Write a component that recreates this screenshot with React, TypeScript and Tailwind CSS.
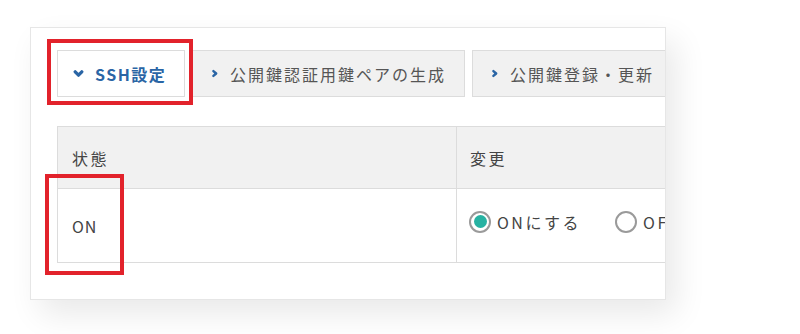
import React from "react";

const tabs = [
    { label: "公開鍵認証用鍵ペアの生成", width: "w-[273px]" },
    { label: "公開鍵登録・更新", width: "w-[260px]" },
];

const Chevron = ({ down }: { down?: boolean }) => (
    <svg
        viewBox="0 0 10 10"
        className={down ? "w-[11px] h-[11px]" : "w-[8px] h-[11px]"}
        fill="none"
        stroke="#2a65a5"
        strokeWidth={3}
        strokeLinecap="round"
        strokeLinejoin="round"
    >
        {down ? (
            <path d="M2 3.5 L5 6.5 L8 3.5" />
        ) : (
            <path d="M3 2 L6.5 5 L3 8" />
        )}
    </svg>
);

const Radio = ({ checked }: { checked?: boolean }) => (
    <span className="w-[22px] h-[22px] rounded-full border-2 border-[#9a9a9a] bg-white flex items-center justify-center shrink-0">
        {checked && <span className="w-[13px] h-[13px] rounded-full bg-[#27b2a2]" />}
    </span>
);

export default function App() {
    return (
        <div
            className="w-[800px] h-[334px] bg-white relative overflow-hidden pt-[27px] pl-[30px]"
            style={{ fontFamily: '"Noto Sans CJK JP", "Noto Sans", sans-serif' }}
        >
            <div className="w-[636px] h-[273px] bg-white border border-[#e6e6e6] shadow-[10px_14px_30px_rgba(0,0,0,0.09)] overflow-hidden pt-[22px] pl-[26px]">
                {/* tabs */}
                <div className="flex gap-[7px] w-[900px]">
                    <div className="w-[128px] h-[47px] shrink-0 bg-white border border-[#dcdcdc] flex items-center pl-[15px] gap-[11px] text-[16px] font-bold text-[#2a65a5] tracking-[1.5px]">
                        <Chevron down />
                        <span>SSH設定</span>
                    </div>
                    {tabs.map((t) => (
                        <div
                            key={t.label}
                            className={`${t.width} h-[47px] shrink-0 bg-[#f1f1f1] border border-[#dcdcdc] flex items-center pl-[18px] gap-[11px] text-[16px] text-[#555] tracking-[2px]`}
                        >
                            <Chevron />
                            <span>{t.label}</span>
                        </div>
                    ))}
                </div>

                {/* table */}
                <div className="mt-[29px] w-[900px] grid grid-cols-[399px_1fr] border-t border-l border-[#dcdcdc] text-[16px] text-[#444] tracking-[2.5px]">
                    <div className="h-[62px] bg-[#f1f1f1] border-r border-b border-[#dcdcdc] flex items-center pl-[14px]">
                        状態
                    </div>
                    <div className="h-[62px] bg-[#f1f1f1] border-b border-[#dcdcdc] flex items-center pl-[13px]">
                        変更
                    </div>
                    <div className="h-[74px] border-r border-b border-[#dcdcdc] flex items-center pl-[14px] tracking-[1px]">
                        ON
                    </div>
                    <div className="h-[74px] border-b border-[#dcdcdc] flex items-center pl-[12px] pb-[8px]">
                        <label className="flex items-center gap-[6px]">
                            <Radio checked />
                            <span>ONにする</span>
                        </label>
                        <label className="flex items-center gap-[6px] ml-[34px]">
                            <Radio />
                            <span>OFFにする</span>
                        </label>
                    </div>
                </div>
            </div>

            {/* highlight boxes */}
            <div className="absolute left-[47px] top-[39px] w-[146px] h-[66px] border-[4px] border-[#e2222b]" />
            <div className="absolute left-[45px] top-[174px] w-[79px] h-[101px] border-[4px] border-[#e2222b]" />
        </div>
    );
}
